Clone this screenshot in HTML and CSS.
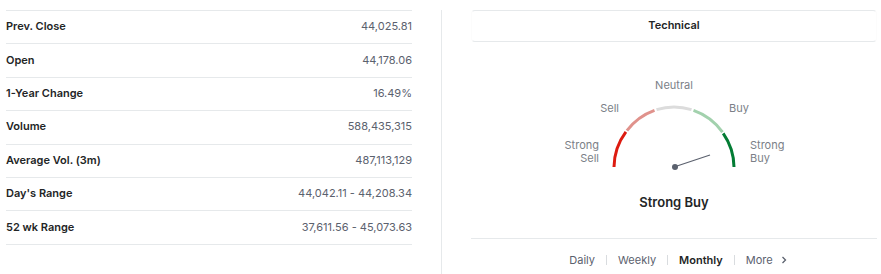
FILE: index.html
```html
<!DOCTYPE html>
<html lang="en">
<head>
  <meta charset="UTF-8" />
  <meta name="viewport" content="width=device-width, initial-scale=1.0"/>
  <title>Overview - Technical</title>
  <link rel="stylesheet" href="styles.css">
</head>
<body>
  <div class="page">
    <div class="stats">
      <div class="row"><span class="label">Prev. Close</span><span class="value">44,025.81</span></div>
      <div class="row"><span class="label">Open</span><span class="value">44,178.06</span></div>
      <div class="row"><span class="label">1-Year Change</span><span class="value">16.49%</span></div>
      <div class="row"><span class="label">Volume</span><span class="value">588,435,315</span></div>
      <div class="row"><span class="label">Average Vol. (3m)</span><span class="value">487,113,129</span></div>
      <div class="row"><span class="label">Day's Range</span><span class="value">44,042.11 - 44,208.34</span></div>
      <div class="row"><span class="label">52 wk Range</span><span class="value">37,611.56 - 45,073.63</span></div>
    </div>

    <div class="divider"></div>

    <div class="technical">
      <div class="tech-header">Technical</div>

      <div class="gauge">
        <svg class="gauge-arc" width="240" height="110" viewBox="0 0 240 110">
          <g fill="none" stroke-width="3">
            <path d="M60 97 A60 60 0 0 1 71.9 61.9" stroke="#dd1b10"/>
            <path d="M72.9 60.6 A60 60 0 0 1 100.5 40.3" stroke="#e0928c"/>
            <path d="M102.5 39.6 A60 60 0 0 1 137.5 39.6" stroke="#dcdcdc"/>
            <path d="M139.5 40.3 A60 60 0 0 1 168.5 62.1" stroke="#a2d1ad"/>
            <path d="M169.2 63.4 A60 60 0 0 1 180 97" stroke="#037c34"/>
          </g>
          <line x1="120" y1="97" x2="156" y2="85" stroke="#5b616e" stroke-width="1.3"/>
          <circle cx="121" cy="97" r="3" fill="#5b616e"/>
        </svg>
        <span class="mark mark-neutral">Neutral</span>
        <span class="mark mark-sell">Sell</span>
        <span class="mark mark-buy">Buy</span>
        <span class="mark mark-strong-sell">Strong<br>Sell</span>
        <span class="mark mark-strong-buy">Strong<br>Buy</span>
      </div>

      <div class="verdict">Strong Buy</div>

      <div class="periods">
        <span class="period">Daily</span>
        <span class="sep"></span>
        <span class="period">Weekly</span>
        <span class="sep"></span>
        <span class="period active">Monthly</span>
        <span class="sep"></span>
        <span class="period">More</span>
        <svg class="chevron" width="6" height="8" viewBox="0 0 6 8">
          <path d="M1.5 1 L4.5 4 L1.5 7" fill="none" stroke="#5b616e" stroke-width="1.3"/>
        </svg>
      </div>
    </div>
  </div>
</body>
</html>
```

FILE: styles.css
```css
* {
  box-sizing: border-box;
}

body {
  margin: 0;
  font-family: Inter, "Noto Sans", Arial, sans-serif;
  font-size: 11px;
  color: #232526;
  background: #fff;
}

.page {
  display: flex;
  padding: 10px 0 0 6px;
  height: 274px;
}

.stats {
  width: 406px;
  border-top: 1px solid #e6e9eb;
  align-self: flex-start;
}

.row {
  display: flex;
  justify-content: space-between;
  align-items: center;
  height: 33.4px;
  padding-bottom: 2px;
  border-bottom: 1px solid #e6e9eb;
}

.label {
  font-weight: 600;
  color: #232526;
}

.value {
  color: #5b616e;
}

.divider {
  width: 1px;
  background: #e6e9eb;
  margin: 0 29px;
}

.technical {
  width: 406px;
  display: flex;
  flex-direction: column;
  align-items: center;
}

.tech-header {
  width: 100%;
  height: 32px;
  line-height: 28px;
  text-align: center;
  font-weight: 600;
  border: 1px solid #e6e9eb;
  border-left-color: #fcfcfc;
  border-right-color: #fcfcfc;
  border-radius: 4px;
}

.gauge {
  position: relative;
  width: 240px;
  height: 110px;
  margin-top: 28px;
}

.gauge-arc {
  display: block;
}

.mark {
  position: absolute;
  line-height: 13px;
  color: #7b7f87;
}

.mark-neutral {
  top: 9px;
  left: 0;
  width: 240px;
  text-align: center;
}

.mark-sell {
  top: 32px;
  right: 175px;
}

.mark-buy {
  top: 32px;
  left: 175px;
}

.mark-strong-sell {
  top: 69px;
  right: 195px;
  text-align: right;
}

.mark-strong-buy {
  top: 69px;
  left: 196px;
}

.verdict {
  margin-top: 14px;
  font-size: 13px;
  line-height: 16px;
  font-weight: 600;
}

.periods {
  width: 100%;
  margin-top: 28px;
  border-top: 1px solid #e6e9eb;
  padding: 14px 0 0 8px;
  display: flex;
  justify-content: center;
  align-items: center;
  line-height: 14px;
  color: #5b616e;
}

.period.active {
  font-weight: 600;
  color: #232526;
}

.sep {
  width: 1px;
  height: 10px;
  background: #d9dcdf;
  margin: 0 11px;
}

.chevron {
  margin-left: 8px;
}
```
